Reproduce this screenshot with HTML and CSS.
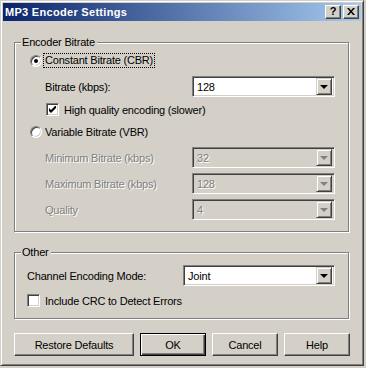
FILE: index.html
```html
<!DOCTYPE html>
<html>
<head>
<meta charset="utf-8">
<link rel="stylesheet" href="styles.css">
</head>
<body>
<div class="window">
  <div class="titlebar">
    <span class="title">MP3 Encoder Settings</span>
    <div class="caps">
      <span class="cap">?</span>
      <span class="cap"><svg width="8" height="7" viewBox="0 0 8 7"><path d="M0 0h2l2 2.5 2-2.5h2l-3 3.5 3 3.5h-2l-2-2.5-2 2.5h-2l3-3.5z" fill="#000"/></svg></span>
    </div>
  </div>
  <div class="client">
    <div class="group g1">
      <span class="legend">Encoder Bitrate</span>
      <div class="row r-cbr">
        <span class="radio on"></span><span class="text focus">Constant Bitrate (CBR)</span>
      </div>
      <div class="row r-combo r-bitrate">
        <span class="lbl">Bitrate (kbps):</span>
        <div class="combo"><span class="val">128</span><span class="drop"><i class="arrow"></i></span></div>
      </div>
      <div class="row r-check">
        <span class="check"><svg width="7" height="7" viewBox="0 0 7 7"><path d="M0 2v3l2 2 5-5v-3l-5 5z" fill="#000"/></svg></span><span class="text">High quality encoding (slower)</span>
      </div>
      <div class="row r-vbr">
        <span class="radio"></span><span class="text">Variable Bitrate (VBR)</span>
      </div>
      <div class="row r-combo r-min dis">
        <span class="lbl">Minimum Bitrate (kbps)</span>
        <div class="combo off"><span class="val">32</span><span class="drop"><i class="arrow"></i></span></div>
      </div>
      <div class="row r-combo r-next dis">
        <span class="lbl">Maximum Bitrate (kbps)</span>
        <div class="combo off"><span class="val">128</span><span class="drop"><i class="arrow"></i></span></div>
      </div>
      <div class="row r-combo r-next dis">
        <span class="lbl">Quality</span>
        <div class="combo off"><span class="val">4</span><span class="drop"><i class="arrow"></i></span></div>
      </div>
    </div>
    <div class="group g2">
      <span class="legend">Other</span>
      <div class="row r-combo r-mode">
        <span class="lbl">Channel Encoding Mode:</span>
        <div class="combo wide"><span class="val">Joint</span><span class="drop"><i class="arrow"></i></span></div>
      </div>
      <div class="row r-crc">
        <span class="check"></span><span class="text">Include CRC to Detect Errors</span>
      </div>
    </div>
    <div class="buttons">
      <span class="btn b-restore">Restore Defaults</span>
      <span class="btn b-def">OK</span>
      <span class="btn">Cancel</span>
      <span class="btn">Help</span>
    </div>
  </div>
</div>
</body>
</html>
```
FILE: styles.css
```css
html, body {
  margin: 0;
  padding: 0;
  background: #d4d0c8;
}
body {
  width: 366px;
  height: 368px;
  overflow: hidden;
  font-family: "Liberation Sans", Arial, sans-serif;
  font-size: 11px;
  letter-spacing: -0.2px;
  color: #000;
}
.window {
  box-sizing: border-box;
  width: 364px;
  height: 366px;
  background: #d4d0c8;
  border-top: 1px solid #d4d0c8;
  border-left: 1px solid #d4d0c8;
  border-right: 1px solid #404040;
  border-bottom: 1px solid #404040;
  box-shadow: inset 1px 1px 0 #fff, inset -1px -1px 0 #808080;
  padding: 2px;
  display: flex;
  flex-direction: column;
}
.titlebar {
  height: 18px;
  background: linear-gradient(to right, #0a246a, #a6caf0);
  display: flex;
  align-items: center;
  justify-content: space-between;
  padding: 0 2px 0 2px;
}
.title {
  color: #fff;
  font-weight: bold;
  font-size: 11px;
  letter-spacing: 0.3px;
}
.caps {
  display: flex;
  gap: 2px;
}
.cap {
  box-sizing: border-box;
  width: 16px;
  height: 14px;
  background: #d4d0c8;
  border-top: 1px solid #fff;
  border-left: 1px solid #fff;
  border-right: 1px solid #404040;
  border-bottom: 1px solid #404040;
  box-shadow: inset -1px -1px 0 #808080;
  display: flex;
  align-items: center;
  justify-content: center;
  font-weight: bold;
  font-size: 11px;
  line-height: 1;
  padding-bottom: 1px;
}
.client {
  flex: 1;
  padding: 21px 11px 0 11px;
  display: flex;
  flex-direction: column;
}
.group {
  position: relative;
  width: 335px;
  box-sizing: border-box;
  border: 1px solid #808080;
  box-shadow: inset 1px 1px 0 #fff, 1px 1px 0 #fff;
  display: flex;
  flex-direction: column;
}
.legend {
  position: absolute;
  top: -7px;
  left: 6px;
  padding: 0 2px 0 1px;
  background: #d4d0c8;
  line-height: 13px;
}
.g1 {
  height: 190px;
  padding: 10px 13px 0 15px;
}
.g2 {
  height: 67px;
  margin-top: 20px;
  padding: 12px 13px 0 12px;
}
.row {
  display: flex;
  align-items: center;
  white-space: nowrap;
}
.r-cbr { height: 15px; }
.r-bitrate { margin-top: 8px; }
.r-check { height: 15px; margin-top: 5px; padding-left: 16px; }
.r-vbr { height: 14px; margin-top: 8px; }
.r-min { margin-top: 8px; }
.r-next { margin-top: 5px; }
.r-combo {
  height: 21px;
  justify-content: space-between;
}
.r-combo .lbl { padding-left: 15px; }
.r-mode .lbl { padding-left: 0; }
.r-crc { height: 13px; margin-top: 8px; }

.dis .lbl {
  color: #808080;
  text-shadow: 1px 1px 0 #fff;
}
.radio {
  position: relative;
  box-sizing: border-box;
  width: 12px;
  height: 12px;
  border-radius: 50%;
  background: #fff;
  border: 1px solid;
  border-color: #808080 #fff #fff #808080;
  box-shadow: inset 1px 1px 0 #404040, inset -1px -1px 0 #d4d0c8;
  margin-right: 3px;
  flex: none;
}
.radio.on::after {
  content: "";
  position: absolute;
  left: 3px;
  top: 3px;
  width: 4px;
  height: 4px;
  border-radius: 50%;
  background: #000;
}
.text.focus {
  outline: 1px dotted #000;
  outline-offset: 0;
  padding: 0 1px;
  margin-left: -1px;
  line-height: 13px;
}
.check {
  box-sizing: border-box;
  width: 13px;
  height: 13px;
  background: #fff;
  border: 1px solid;
  border-color: #808080 #fff #fff #808080;
  box-shadow: inset 1px 1px 0 #404040, inset -1px -1px 0 #d4d0c8;
  margin-right: 5px;
  display: flex;
  align-items: center;
  justify-content: center;
  flex: none;
}
.combo {
  box-sizing: border-box;
  width: 143px;
  height: 21px;
  background: #fff;
  border: 1px solid;
  border-color: #808080 #fff #fff #808080;
  box-shadow: inset 1px 1px 0 #404040, inset -1px -1px 0 #d4d0c8;
  padding: 2px;
  display: flex;
  align-items: center;
  justify-content: space-between;
}
.combo.wide { width: 152px; }
.combo.off { background: #d4d0c8; }
.combo .val { padding-left: 2px; }
.combo.off .val {
  color: #808080;
  text-shadow: 1px 1px 0 #fff;
}
.drop {
  box-sizing: border-box;
  width: 16px;
  height: 17px;
  background: #d4d0c8;
  border-top: 1px solid #d4d0c8;
  border-left: 1px solid #d4d0c8;
  border-right: 1px solid #404040;
  border-bottom: 1px solid #404040;
  box-shadow: inset 1px 1px 0 #fff, inset -1px -1px 0 #808080;
  display: flex;
  align-items: center;
  justify-content: center;
}
.arrow {
  width: 0;
  height: 0;
  border-left: 4px solid transparent;
  border-right: 4px solid transparent;
  border-top: 4px solid #000;
  margin-top: 1px;
}
.combo.off .arrow {
  border-top-color: #808080;
}
.buttons {
  display: flex;
  gap: 6px;
  margin-top: 14px;
}
.btn {
  box-sizing: border-box;
  width: 66px;
  height: 23px;
  background: #d4d0c8;
  border-top: 1px solid #fff;
  border-left: 1px solid #fff;
  border-right: 1px solid #404040;
  border-bottom: 1px solid #404040;
  box-shadow: inset -1px -1px 0 #808080;
  display: flex;
  align-items: center;
  justify-content: center;
}
.b-restore { width: 120px; }
.b-def {
  border: 1px solid #000;
  box-shadow: inset 1px 1px 0 #fff, inset -1px -1px 0 #404040, inset -2px -2px 0 #808080;
}
```
